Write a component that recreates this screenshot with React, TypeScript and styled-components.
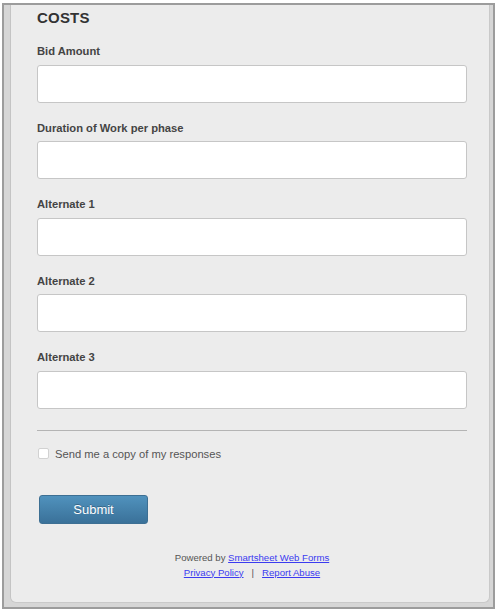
import React from 'react';
import styled, { createGlobalStyle } from 'styled-components';

const GlobalStyle = createGlobalStyle`
  html, body {
    margin: 0;
    padding: 0;
    background: #ffffff;
    font-family: "Liberation Sans", Arial, sans-serif;
  }
`;

const Frame = styled.div`
  box-sizing: border-box;
  margin: 3px 0 0 2px;
  width: 493px;
  height: 606px;
  border: 2px solid #9c9c9c;
  background: #d6d6d6;
  padding: 0 3px 4px 6px;
  display: flex;
`;

const Panel = styled.div`
  flex: 1;
  box-sizing: border-box;
  background: #ececec;
  border-left: 1px solid #c4c4c4;
  border-right: 1px solid #c9c9c9;
  border-bottom: 1px solid #c9c9c9;
  border-radius: 0 0 6px 6px;
  padding: 3px 22px 0 26px;
  display: flex;
  flex-direction: column;
`;

const Heading = styled.h2`
  margin: 0;
  font-size: 15px;
  font-weight: bold;
  color: #333;
  line-height: 20px;
  letter-spacing: 0.2px;
`;

const Field = styled.div`
  display: flex;
  flex-direction: column;
  margin-top: ${(p: { $first?: boolean }) => (p.$first ? '17px' : '19px')};
`;

const Label = styled.label`
  font-size: 11.2px;
  font-weight: bold;
  color: #444;
  line-height: 13.5px;
  margin-bottom: 6px;
`;

const TextInput = styled.input`
  box-sizing: border-box;
  width: 100%;
  height: 38px;
  margin: 0;
  background: #fff;
  border: 1px solid #c6c6c6;
  border-radius: 3px;
  outline: none;
`;

const Divider = styled.hr`
  margin: 21px 0 0 0;
  border: none;
  border-top: 1px solid #b4b4b4;
  height: 0;
`;

const CheckRow = styled.label`
  display: flex;
  align-items: center;
  gap: 6px;
  margin-top: 16px;
  margin-left: 1px;
  font-size: 11.2px;
  color: #555;
  line-height: 14px;
`;

const Box = styled.span`
  box-sizing: border-box;
  width: 11px;
  height: 11px;
  background: #fff;
  border: 1px solid #d2d2d2;
  border-radius: 2px;
`;

const SubmitButton = styled.button`
  margin: 34px 0 0 2px;
  width: 109px;
  height: 29px;
  border: 1px solid #3d6f93;
  border-radius: 3px;
  background: linear-gradient(#5092bd, #3a7199);
  color: #fff;
  font-family: "Liberation Sans", Arial, sans-serif;
  font-size: 13px;
  text-shadow: 0 -1px 0 rgba(0, 0, 0, 0.25);
  align-self: flex-start;
`;

const Footer = styled.div`
  margin-top: 26px;
  text-align: center;
  font-size: 9.6px;
  line-height: 15px;
  color: #555;
`;

const Link = styled.a`
  color: #3b3bf0;
  text-decoration: underline;
`;

const Sep = styled.span`
  margin: 0 8px;
  color: #555;
`;

const fields = ['Bid Amount', 'Duration of Work per phase', 'Alternate 1', 'Alternate 2', 'Alternate 3'];

const App: React.FC = () => (
  <>
    <GlobalStyle />
    <Frame>
      <Panel>
        <Heading>COSTS</Heading>
        {fields.map((f, i) => (
          <Field key={f} $first={i === 0}>
            <Label>{f}</Label>
            <TextInput type="text" />
          </Field>
        ))}
        <Divider />
        <CheckRow>
          <Box />
          Send me a copy of my responses
        </CheckRow>
        <SubmitButton>Submit</SubmitButton>
        <Footer>
          <div>
            Powered by <Link href="#">Smartsheet Web Forms</Link>
          </div>
          <div>
            <Link href="#">Privacy Policy</Link>
            <Sep>|</Sep>
            <Link href="#">Report Abuse</Link>
          </div>
        </Footer>
      </Panel>
    </Frame>
  </>
);

export default App;
